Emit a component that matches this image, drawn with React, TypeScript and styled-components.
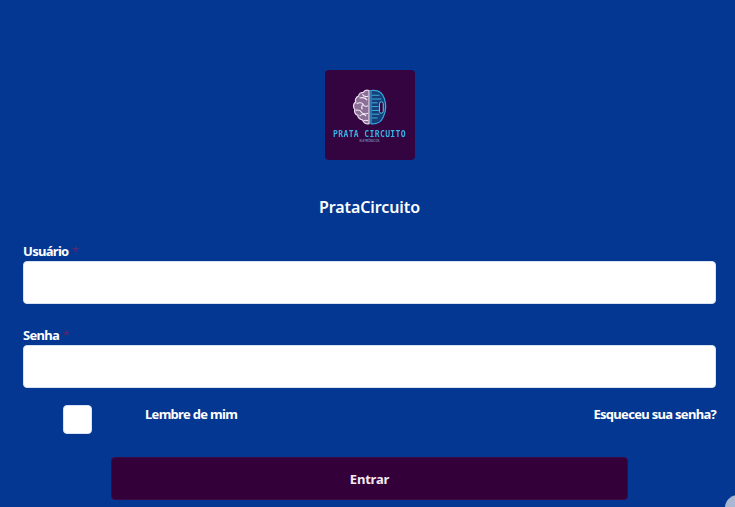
import React from "react";
import styled, { createGlobalStyle } from "styled-components";

const Global = createGlobalStyle`
  html, body { margin: 0; padding: 0; height: 100%; overflow: hidden; background: #043791; }
  * { box-sizing: border-box; }
`;

const Page = styled.main`
  position: relative;
  width: 735px;
  height: 507px;
  overflow: hidden;
  padding: 70px 19px 0 23px;
  background: #043791;
  color: #fff;
  font-family: "Noto Sans", "Open Sans", sans-serif;
`;

const Logo = styled.div`
  width: 90px;
  height: 90px;
  margin: 0 auto;
  padding-top: 19px;
  border-radius: 4px;
  background: #33043f;
  display: flex;
  flex-direction: column;
  align-items: center;
  overflow: hidden;
`;

const LogoName = styled.span`
  margin-top: 2px;
  font: bold 8px/9px "DejaVu Sans Mono", monospace;
  letter-spacing: 0.4px;
  color: #37b3e6;
  white-space: nowrap;
  filter: blur(0.3px);
`;

const LogoSub = styled.span`
  font: 3px/4px "Noto Sans", sans-serif;
  color: #8fb6d8;
  white-space: nowrap;
`;

const Title = styled.h1`
  margin: 36px 0 0;
  height: 22px;
  font-size: 16px;
  line-height: 22px;
  font-weight: 600;
  letter-spacing: -0.1px;
  text-align: center;
`;

const Field = styled.div`
  margin-top: ${(p: { $top: number }) => p.$top}px;
`;

const Label = styled.label`
  display: block;
  height: 20px;
  font-size: 13px;
  line-height: 20px;
  font-weight: 700;
  letter-spacing: -0.7px;
`;

const Required = styled.span`
  margin-left: 3px;
  font-weight: 400;
  color: #5d2470;
`;

const Input = styled.input`
  display: block;
  width: 100%;
  height: 43px;
  border: 1px solid #d9e2f2;
  border-radius: 4px;
  background: #fff;
  outline: none;
`;

const OptionsRow = styled.div`
  display: flex;
  align-items: flex-start;
  margin-top: 17px;
  height: 29px;
  font-size: 13px;
  line-height: 18px;
  font-weight: 700;
  letter-spacing: -0.7px;
`;

const RememberBox = styled.input.attrs({ type: "checkbox" })`
  appearance: none;
  flex: none;
  width: 29px;
  height: 29px;
  margin: 0 0 0 40px;
  border: 1px solid #d9e2f2;
  border-radius: 4px;
  background: #fff;
`;

const RememberLabel = styled.label`
  margin-left: 53px;
  flex: 1;
`;

const ForgotLink = styled.a`
  color: #fff;
  text-decoration: none;
`;

const Submit = styled.button`
  display: block;
  width: 517px;
  height: 43px;
  margin: 23px 0 0 88px;
  border: 1px solid #3a0a44;
  border-radius: 4px;
  background: #33003a;
  color: #f3eaf4;
  font-family: inherit;
  font-size: 13px;
  font-weight: 700;
  letter-spacing: -0.2px;
`;

const CornerBubble = styled.div`
  position: absolute;
  right: -16px;
  bottom: -14px;
  width: 26px;
  height: 26px;
  border-radius: 50%;
  background: #a9b7d3;
`;

const BrainMark = () => (
  <svg width="36" height="39" viewBox="0 0 38 40" aria-hidden="true">
    <path d="M18 1c-3-1-5 0-6 2-3 0-5 2-5 4-3 1-4 4-3 6-3 2-3 6-1 8-1 3 1 6 3 6 0 3 3 5 5 5 1 3 4 5 7 4z" fill="#8c6f97" stroke="#e9dcec" strokeWidth="1.3" />
    <path d="M8 9c3-1 6 0 8 2M5 15c3-2 6-1 7 1s3 2 5 1M4 22c3-1 5 0 6 2s4 2 7 1M8 28c2-2 5-2 7 0M11 5c1 2 3 3 6 2M12 33c2-1 3-1 5 0M11 16c-1 2-1 4 0 5" fill="none" stroke="#f2e8f3" strokeWidth="1.2" />
    <path d="M20 1c7-1 12 2 14 8 2 6 2 14-1 20-2 5-7 8-13 7z" fill="#143f78" stroke="#33a9df" strokeWidth="1.3" />
    <path d="M21 6h8M21 10h10M21 14h6M21 18h7M21 22h10M21 26h8M21 30h6" fill="none" stroke="#3fb4e4" strokeWidth="1" />
    <rect x="29" y="13" width="4" height="12" rx="2" fill="#33043f" stroke="#5fd0f0" strokeWidth="1" />
  </svg>
);

export default function App() {
  return (
    <Page>
      <Global />
      <Logo>
        <BrainMark />
        <LogoName>PRATA CIRCUITO</LogoName>
        <LogoSub>ELETRÔNICOS</LogoSub>
      </Logo>
      <Title>PrataCircuito</Title>
      <Field $top={23}>
        <Label htmlFor="user">Usuário<Required>*</Required></Label>
        <Input id="user" />
      </Field>
      <Field $top={21}>
        <Label htmlFor="pass">Senha<Required>*</Required></Label>
        <Input id="pass" type="password" />
      </Field>
      <OptionsRow>
        <RememberBox id="remember" />
        <RememberLabel htmlFor="remember">Lembre de mim</RememberLabel>
        <ForgotLink href="#">Esqueceu sua senha?</ForgotLink>
      </OptionsRow>
      <Submit type="button">Entrar</Submit>
      <CornerBubble />
    </Page>
  );
}
